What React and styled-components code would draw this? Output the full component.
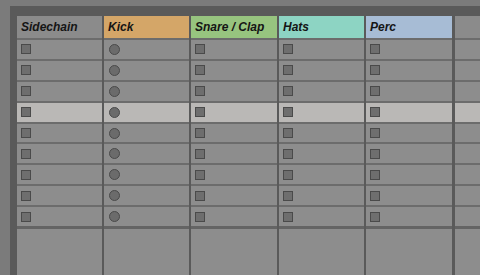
import React from "react";
import styled, { createGlobalStyle } from "styled-components";

const Global = createGlobalStyle`
  html, body { margin: 0; padding: 0; background: #7b7b7b; }
  body { width: 480px; height: 275px; overflow: hidden; }
  #root { height: 275px; }
`;

const Page = styled.div`
  box-sizing: border-box;
  height: 275px;
  padding: 6px 0 0 10px;
`;

const Frame = styled.div`
  box-sizing: border-box;
  height: 100%;
  background: #5a5a5a;
  padding: 10px 0 0 7px;
`;

const Table = styled.div`
  display: grid;
  grid-template-columns: 85px 85px 86px 85px 86px 1fr;
  column-gap: 2px;
  height: 100%;
`;

const Column = styled.div`
  display: flex;
  flex-direction: column;
  margin-left: ${(p) => (p.$last ? "1px" : "0")};
`;

const Header = styled.div`
  height: 22px;
  flex: none;
  background: ${(p) => p.$color};
  font-family: "Liberation Sans", Arial, sans-serif;
  font-weight: bold;
  font-style: italic;
  font-size: 12px;
  line-height: 22px;
  color: #151515;
  padding-left: 4px;
  white-space: nowrap;
  overflow: hidden;
`;

const Cell = styled.div`
  box-sizing: border-box;
  height: 20.9px;
  flex: none;
  border-top: 2px solid #6c6c6c;
  background: ${(p) => (p.$hl ? "#bab8b6" : "#8d8d8d")};
  display: flex;
  align-items: center;
  padding-left: 4px;
`;

const Filler = styled.div`
  flex: 1;
  background: #8d8d8d;
  border-top: 3px solid #646464;
`;

const Square = styled.span`
  box-sizing: border-box;
  width: 10px;
  height: 10px;
  background: #6e6e6e;
  border: 1px solid #4a4a4a;
`;

const Circle = styled.span`
  box-sizing: border-box;
  width: 11px;
  height: 11px;
  margin-left: 1px;
  border-radius: 50%;
  background: #6b6b6b;
  border: 1px solid #4a4a4a;
`;

const columns = [
  { name: "Sidechain", color: "#8b8b8b", icon: "square" },
  { name: "Kick", color: "#d4a668", icon: "circle" },
  { name: "Snare / Clap", color: "#97c47f", icon: "square" },
  { name: "Hats", color: "#8dd4c3", icon: "square" },
  { name: "Perc", color: "#a7bcd5", icon: "square" },
  { name: "", color: "#8b8b8b", icon: null },
];

const ROWS = 9;
const HIGHLIGHT = 3;

export default function App() {
  return (
    <>
      <Global />
      <Page>
        <Frame>
          <Table>
            {columns.map((c, ci) => (
              <Column key={ci} $last={ci === columns.length - 1}>
                <Header $color={c.color}>{c.name}</Header>
                {Array.from({ length: ROWS }).map((_, ri) => (
                  <Cell key={ri} $hl={ri === HIGHLIGHT}>
                    {c.icon === "square" && <Square />}
                    {c.icon === "circle" && <Circle />}
                  </Cell>
                ))}
                <Filler />
              </Column>
            ))}
          </Table>
        </Frame>
      </Page>
    </>
  );
}
